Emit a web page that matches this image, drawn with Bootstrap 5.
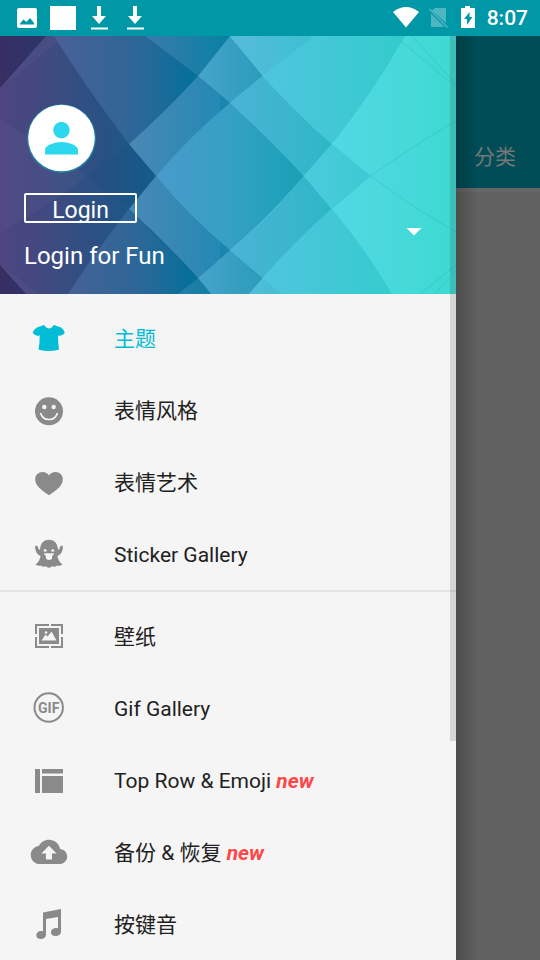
<!DOCTYPE html>
<html lang="zh-CN">
<head>
<meta charset="utf-8">
<meta name="viewport" content="width=device-width, initial-scale=1">
<title>Keyboard themes</title>
<link href="https://cdn.jsdelivr.net/npm/bootstrap@5.3.0/dist/css/bootstrap.min.css" rel="stylesheet">
<style>
  body { font-family: Roboto, "Noto Sans CJK SC", sans-serif; background: #616161; }
  .status-bar { height: 36px; background: #0097a7; color: #fff; padding: 0 12px 0 9px; }
  .clock { font-size: 21px; line-height: 38px; font-weight: 500; margin-left: 4px; }
  .drawer { background: #f5f5f5; }
  .drawer-head { padding: 64px 30px 23px 24px; color: #fff; isolation: isolate; }
  .head-art { inset: 0; z-index: -1; }
  .login-btn { width: 113px; height: 30px; padding: 5px 0 0; border: 2px solid #fff; border-radius: 2px; background: none; color: #fff; font-size: 23px; line-height: 26px; overflow: hidden; }
  .head-title { font-size: 24px; line-height: 30px; margin-top: 18px; }
  .avatar-box { margin-bottom: 17px; }
  .caret-btn { background: none; border: 0; }
  .menu-item { height: 72px; padding-left: 24px; gap: 40px; color: #212121; font-size: 21px; line-height: 28px; text-decoration: none; }
  .menu-item > span { padding-top: 2px; }
  .menu-item svg { fill: #8a8a8a; flex: none; }
  .menu-item.current { color: #00bcd4; }
  .menu-item.current svg { fill: #00bcd4; }
  .tag-new { color: #ff4545; font-weight: 700; font-style: italic; }
  .menu-split { border-top: 2px solid #e3e3e3; }
  .scroll-thumb { top: 0; right: 0; width: 6px; height: 705px; background: rgba(60, 60, 60, .17); }
  .behind { width: 84px; background: #616161; }
  .behind-shade { inset: 0; background: linear-gradient(90deg, rgba(0,0,0,.22), rgba(0,0,0,0) 22px); }
  .behind-bar { height: 152px; padding: 0 18px 17px; background: #004d57; }
  .behind-edge { height: 4px; background: #676767; }
  .tab-link { color: #737777; font-size: 21px; line-height: 28px; text-decoration: none; }
</style>
</head>
<body>
<div class="d-flex flex-column min-vh-100">
  <header class="status-bar d-flex align-items-center">
    <svg width="36" height="36" fill="#fff"><path fill-rule="evenodd" d="M10 8h16q2 0 2 2v16q0 2-2 2H10q-2 0-2-2V10q0-2 2-2zM11 24.500h14v-1.500l-4-5-3.500 4-3-2.500-3.500 4z"/></svg>
    <svg width="36" height="36" fill="#fff"><path d="M5 6h26v24H5z"/></svg>
    <svg width="36" height="36" fill="#fff"><path d="M16 6h4v10h5l-7 8-7-8h5zM10 27.500h17v2H10z"/></svg>
    <svg width="36" height="36" fill="#fff"><path d="M16 6h4v10h5l-7 8-7-8h5zM10 27.500h17v2H10z"/></svg>
    <svg class="ms-auto" width="31" height="36" fill="#fff"><path d="M3 12Q16 2 29 12L16 27.500z"/></svg>
    <svg width="31" height="36"><path fill="#4db6c1" d="M14 8h11v15L11 10.500zM10 13.500L23.500 27H10z"/><path stroke="#4db6c1" stroke-width="1.600" d="M8.500 9l18 18.500"/></svg>
    <svg width="31" height="36" fill="#fff"><path fill-rule="evenodd" d="M13 6h5v2h5v20H9V8h4zM17.500 12l-5.500 7h3v6l5.500-8h-3z"/></svg>
    <span class="clock">8:07</span>
  </header>

  <div class="d-flex flex-grow-1">
    <aside class="drawer flex-grow-1 position-relative">
      <section class="drawer-head position-relative">
        <svg class="head-art position-absolute w-100 h-100" viewBox="0 0 456 258" preserveAspectRatio="none">
          <defs>
            <linearGradient id="g0" gradientUnits="userSpaceOnUse" x1="0" x2="156" y1="0" y2="0"><stop offset="0" stop-color="#4e4480"/><stop offset=".35" stop-color="#3d4b80"/><stop offset=".7" stop-color="#265284"/><stop offset="1" stop-color="#155f8e"/></linearGradient>
            <linearGradient id="g1" gradientUnits="userSpaceOnUse" x1="0" x2="65" y1="0" y2="0"><stop offset="0" stop-color="#382e62"/><stop offset="1" stop-color="#25396d"/></linearGradient>
            <linearGradient id="g3" gradientUnits="userSpaceOnUse" x1="54" x2="198" y1="0" y2="0"><stop offset="0" stop-color="#4a6097"/><stop offset=".6" stop-color="#2c6797"/><stop offset="1" stop-color="#00719b"/></linearGradient>
            <linearGradient id="g4" gradientUnits="userSpaceOnUse" x1="145" x2="230" y1="0" y2="0"><stop offset="0" stop-color="#3c79ab"/><stop offset="1" stop-color="#0682a4"/></linearGradient>
            <linearGradient id="g5" gradientUnits="userSpaceOnUse" x1="129" x2="240" y1="0" y2="0"><stop offset="0" stop-color="#4a88b5"/><stop offset="1" stop-color="#1b89b3"/></linearGradient>
            <linearGradient id="g6" gradientUnits="userSpaceOnUse" x1="195" x2="263" y1="0" y2="0"><stop offset="0" stop-color="#48a3cb"/><stop offset="1" stop-color="#2b9cbb"/></linearGradient>
            <linearGradient id="g7" gradientUnits="userSpaceOnUse" x1="230" x2="315" y1="0" y2="0"><stop offset="0" stop-color="#56bbdc"/><stop offset="1" stop-color="#3cc0d0"/></linearGradient>
            <linearGradient id="g8" gradientUnits="userSpaceOnUse" x1="156" x2="304" y1="0" y2="0"><stop offset="0" stop-color="#4a9ac9"/><stop offset=".5" stop-color="#36a0c4"/><stop offset="1" stop-color="#17a1b6"/></linearGradient>
            <linearGradient id="g9" gradientUnits="userSpaceOnUse" x1="230" x2="332" y1="0" y2="0"><stop offset="0" stop-color="#4cb3d7"/><stop offset="1" stop-color="#2db7c5"/></linearGradient>
            <linearGradient id="g10" gradientUnits="userSpaceOnUse" x1="260" x2="405" y1="0" y2="0"><stop offset="0" stop-color="#50c4df"/><stop offset="1" stop-color="#32cccc"/></linearGradient>
            <linearGradient id="g11" gradientUnits="userSpaceOnUse" x1="304" x2="371" y1="0" y2="0"><stop offset="0" stop-color="#4ccbdd"/><stop offset="1" stop-color="#3acad2"/></linearGradient>
            <linearGradient id="g12" gradientUnits="userSpaceOnUse" x1="332" x2="456" y1="0" y2="0"><stop offset="0" stop-color="#53d8e4"/><stop offset="1" stop-color="#3cdad1"/></linearGradient>
            <linearGradient id="g13" gradientUnits="userSpaceOnUse" x1="371" x2="456" y1="0" y2="0"><stop offset="0" stop-color="#4ed8df"/><stop offset="1" stop-color="#3cdad1"/></linearGradient>
          </defs>
          <path fill="url(#g0)" d="M0 0H230V258H0z"/>
          <path fill="url(#g12)" d="M230 0H456V258H230z"/>
          <path fill="#fff" opacity=".03" d="M0 52L65 0H46L0 50zM0 83Q48 111 88 140Q48 168 0 198zM0 230L40 258H25z"/>
          <path fill="#003c78" opacity=".08" d="M88 140L129 108L156 140L129 173z"/>
          <path fill="url(#g1)" d="M0 0H46L0 52zM0 229L26 258H0z"/>
          <path fill="url(#g3)" d="M54 0H145L198 40Q165 76 129 108Q87 53 54 0zM129 173Q98 212 68 258H178L198 242z"/>
          <path fill="url(#g4)" d="M145 0H230L198 40zM198 242L178 258H211z"/>
          <path fill="url(#g5)" d="M129 108Q165 76 198 40L230 67L240 76L156 140zM156 140L240 204L230 214L198 242Q165 206 129 173z"/>
          <path fill="url(#g6)" d="M198 40L230 0L263 40L230 67zM198 242L230 214L263 242L249 258H211z"/>
          <path fill="#1c84b0" d="M220 59L230 67L220 76zM220 205L230 214L220 222z"/>
          <path fill="url(#g7)" d="M230 0H315L263 40zM263 242L249 258H283z"/>
          <path fill="url(#g8)" d="M156 140Q192 98 230 67Q266 99 304 140Q267 183 230 214Q192 183 156 140z"/>
          <path fill="url(#g9)" d="M230 67L263 40Q297 78 332 108L304 140Q266 99 230 67zM304 140L332 173Q297 203 263 242L230 214Q267 183 304 140z"/>
          <path fill="url(#g10)" d="M263 40L315 0H405Q372 58 332 108Q297 78 263 40zM263 242Q297 203 332 173Q365 212 392 258H283z"/>
          <path fill="url(#g11)" d="M332 108L371 140L332 173L304 140z"/>
          <path fill="url(#g13)" d="M371 140Q414 109 456 85V196Q412 171 371 140z"/>
          <g fill="none" stroke="#25b5b9" opacity=".4"><path d="M371 140Q414 109 456 85M371 140Q412 171 456 196M395 0L456 51M412 0L456 48M420 258L456 229M435 258L456 234"/></g>
        </svg>
        <div class="avatar-box">
          <svg class="d-block" width="76" height="76" viewBox="0 0 76 76">
            <circle cx="37.500" cy="38.500" r="34.500" fill="#16a0b5" opacity=".6"/>
            <circle cx="37.500" cy="38" r="33.300" fill="#fff"/>
            <path fill="#2bd8ee" d="M37.500 22a8.200 8.200 0 1 1-.1 0zM21 54.500v-4.500c0-5 10-8 16.500-8s16.500 3 16.500 8v4.500z"/>
          </svg>
        </div>
        <div class="d-flex align-items-center justify-content-between">
          <div>
            <button type="button" class="login-btn d-flex align-items-center justify-content-center">Login</button>
            <div class="head-title">Login for Fun</div>
          </div>
          <button type="button" class="caret-btn p-0" aria-label="Accounts"><svg class="d-block" width="24" height="24" fill="#fff"><path d="M4.500 8h15L12 15.500z"/></svg></button>
        </div>
      </section>

      <nav>
        <div class="pt-2">
          <a href="#" class="menu-item current d-flex align-items-center"><svg width="50" height="50"><path d="M20 12Q25 19 30 12L37 14.500Q39.500 16 40.800 20Q38 23 35 23L34 22Q34 30 35 36.500Q25 39.500 14.500 36.500Q15.800 30 15.700 22L14.500 23Q11 23 8.700 20Q10 16 13 14.500z"/></svg><span>主题</span></a>
          <a href="#" class="menu-item d-flex align-items-center"><svg width="50" height="50"><circle cx="25" cy="26.300" r="14"/><g fill="#f5f5f5"><circle cx="20.300" cy="22" r="2.200"/><circle cx="29.700" cy="22" r="2.200"/></g><path d="M16.500 28Q18.500 34.500 25 34.500T33.500 28" fill="none" stroke="#f5f5f5" stroke-width="1.700"/></svg><span>表情风格</span></a>
          <a href="#" class="menu-item d-flex align-items-center"><svg width="50" height="50"><path d="M25 38.300C18 33.500 11.200 29 11.200 22.300C11.200 18 14.500 15 18.500 15C21.300 15 23.700 16.400 25 18.500C26.300 16.400 28.700 15 31.500 15C35.500 15 38.800 18 38.800 22.300C38.800 29 32 33.500 25 38.300z"/></svg><span>表情艺术</span></a>
          <a href="#" class="menu-item d-flex align-items-center"><svg width="50" height="50"><path d="M25 10.700C29.800 10.700 33.300 14 33.800 19.500L34.500 21Q36 19.500 36 17.500L38.800 16.500Q39.500 20.500 37.500 23.500Q36 26 33.500 27Q34 32 38.500 35.500Q36 37.500 33 36.500Q31 38.500 28.500 37.300Q25 40 21.500 37.300Q19 38.500 17 36.500Q14 37.500 11.500 35.500Q16 32 16.500 27Q14 26 12.500 23.500Q10.500 20.500 11.200 16.500L14 17.500Q14 19.500 15.500 21L16.200 19.500C16.700 14 20.200 10.700 25 10.700z"/><g fill="#f5f5f5"><path d="M20 24.300h10Q30 26 28.300 26.800L27.800 30Q25 32 22.200 30L21.700 26.800Q20 26 20 24.300z"/><path d="M19.500 22.500q0-2.500 1.700-2.500t1.700 2.500zM27.100 22.500q0-2.500 1.700-2.500t1.700 2.500z"/></g></svg><span>Sticker Gallery</span></a>
        </div>
        <div class="menu-split pt-2">
          <a href="#" class="menu-item d-flex align-items-center"><svg width="50" height="50"><path d="M11 13h14v2H13v8h-2zM27 13h12v10h-2v-8H27zM11 26h2v9h12v2H11zM37 26h2v11H27v-2h10z"/><path d="M15 17h20v16H15z"/><path fill="#f5f5f5" d="M17.500 29.500l4-6 2 2 4-5 5 9z"/><circle cx="22" cy="21.500" r="1.300" fill="#f5f5f5"/></svg><span>壁纸</span></a>
          <a href="#" class="menu-item d-flex align-items-center"><svg width="50" height="50"><circle cx="24.700" cy="24.500" r="14.200" fill="none" stroke="#8a8a8a" stroke-width="2"/><text x="24.700" y="29.500" text-anchor="middle" font-size="14" font-weight="700">GIF</text></svg><span>Gif Gallery</span></a>
          <a href="#" class="menu-item d-flex align-items-center"><svg width="50" height="50"><path d="M11 14h5v24h-5zM18 14h21v4.500H18zM18 21h21v17H18z"/></svg><span>Top Row &amp; Emoji <span class="tag-new">new</span></span></a>
          <a href="#" class="menu-item d-flex align-items-center"><svg width="50" height="50"><path transform="translate(6.700 6.700) scale(1.520)" d="M19.350 10.040C18.670 6.590 15.640 4 12 4 9.110 4 6.600 5.640 5.350 8.040 2.340 8.360 0 10.910 0 14c0 3.310 2.690 6 6 6h13c2.760 0 5-2.240 5-5 0-2.640-2.050-4.780-4.650-4.960zM14 13v4h-4v-4H7l5-5 5 5h-3z"/></svg><span>备份 &amp; 恢复 <span class="tag-new">new</span></span></a>
          <a href="#" class="menu-item d-flex align-items-center"><svg width="50" height="50"><path d="M19 13.500L37 10V32.500C37 35.500 34.500 37 31.500 37C28.500 37 27 35.500 27 33.500C27 30.500 30 28.500 34 29.300V18L22 20V35.500C22 38.500 19.500 40 16.700 40C14 40 12.300 38.500 12.300 36.500C12.300 33.500 15 31.500 19 32.300z"/></svg><span>按键音</span></a>
        </div>
      </nav>
      <div class="scroll-thumb position-absolute"></div>
    </aside>

    <main class="behind position-relative flex-shrink-0">
      <div class="behind-bar d-flex align-items-end"><a href="#" class="tab-link">分类</a></div>
      <div class="behind-edge"></div>
      <div class="behind-shade position-absolute"></div>
    </main>
  </div>
</div>
<script src="https://cdn.jsdelivr.net/npm/bootstrap@5.3.0/dist/js/bootstrap.bundle.min.js"></script>
</body>
</html>
